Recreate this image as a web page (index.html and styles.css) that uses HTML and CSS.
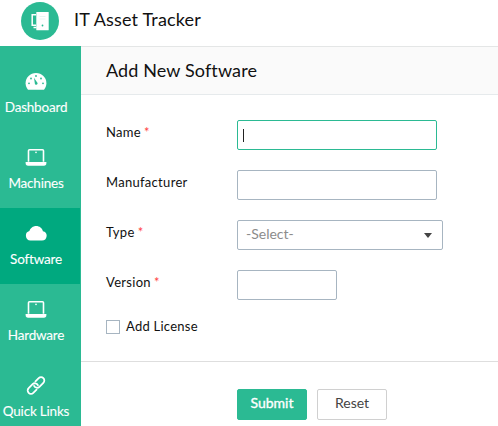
FILE: index.html
```html
<!DOCTYPE html>
<html lang="en">
<head>
<meta charset="utf-8">
<title>IT Asset Tracker</title>
<link rel="stylesheet" href="styles.css">
</head>
<body>
<header class="topbar">
  <svg class="logo" viewBox="0 0 38 38">
    <circle cx="19" cy="19" r="19" fill="#2bba93"/>
    <path d="M15 12.700h-3.800v10.600H15M12.500 25.500h3" fill="none" stroke="#fff" stroke-width="1.500"/>
    <rect x="15.300" y="10" width="12.400" height="18.300" rx=".6" fill="#fff"/>
    <path d="M18.500 14.500h6M18.500 17h6" stroke="#e0f4ee" stroke-width=".8"/>
    <circle cx="21.500" cy="23.500" r=".9" fill="#2bba93"/>
  </svg>
  <h1 class="app-name">IT Asset Tracker</h1>
</header>
<div class="layout">
  <nav class="sidebar">
    <a class="item">
      <svg class="icon" viewBox="0 0 22 22">
        <path d="M3 19.700C1.500 18 .6 15.700.6 13.200.6 7.300 5.200 3 11 3s10.400 4.300 10.400 10.200c0 2.500-.9 4.800-2.400 6.500z" fill="#fff"/>
        <g fill="#2bba93"><circle cx="4" cy="13.300" r=".9"/><circle cx="6" cy="8.500" r=".9"/><circle cx="11" cy="6" r=".9"/><circle cx="16" cy="8.500" r=".9"/><circle cx="18" cy="13.300" r=".9"/><path d="M9 7.700l3 4.500a1.400 1.400 0 1 1-2.200 1z"/></g>
      </svg>
      <span class="text">Dashboard</span>
    </a>
    <a class="item">
      <svg class="icon" viewBox="0 0 22 22">
        <path d="M3.500 15.700V4.700q0-1 1-1h13q1 0 1 1v11" fill="none" stroke="#fff" stroke-width="1.600"/>
        <path d="M.6 16h20.800v1q0 2.700-2.500 2.700H3.100Q.6 19.700.6 17z" fill="#fff"/><circle cx="11" cy="6.400" r=".8" fill="#fff"/>
      </svg>
      <span class="text">Machines</span>
    </a>
    <a class="item active">
      <svg class="icon" viewBox="0 0 22 22">
        <path d="M5.400 18.500a4.800 4.800 0 0 1-1-9.400C5.300 6.200 8 4 11.200 4c3.300 0 6 2.200 6.700 5.200a4.700 4.700 0 0 1-1 9.300z" fill="#fff"/>
      </svg>
      <span class="text">Software</span>
    </a>
    <a class="item">
      <svg class="icon" viewBox="0 0 22 22">
        <path d="M3.500 15.700V4.700q0-1 1-1h13q1 0 1 1v11" fill="none" stroke="#fff" stroke-width="1.600"/>
        <path d="M.6 16h20.800v1q0 2.700-2.500 2.700H3.100Q.6 19.700.6 17z" fill="#fff"/><circle cx="11" cy="6.400" r=".8" fill="#fff"/>
      </svg>
      <span class="text">Hardware</span>
    </a>
    <a class="item">
      <svg class="icon" viewBox="0 0 22 22">
        <g transform="rotate(-45 11 11.500)" fill="none" stroke="#fff" stroke-width="1.800" stroke-linecap="round">
          <path d="M8.500 14.800H3.900a3.300 3.300 0 0 1 0-6.600H9.500a3.300 3.300 0 0 1 3.100 4.400"/>
          <path d="M13.500 8.200h4.600a3.300 3.300 0 0 1 0 6.600H12.500A3.300 3.300 0 0 1 9.400 10.400"/>
        </g>
      </svg>
      <span class="text">Quick Links</span>
    </a>
  </nav>
  <main class="main">
    <h2 class="title"><span class="title-text">Add New Software</span></h2>
    <form class="form">
      <div class="row"><label class="label">Name <b class="star">*</b></label><div class="field focus"><i class="caret"></i></div></div>
      <div class="row"><label class="label">Manufacturer</label><div class="field"></div></div>
      <div class="row"><label class="label">Type <b class="star">*</b></label><div class="field select"><span class="placeholder">-Select-</span><i class="arrow"></i></div></div>
      <div class="row"><label class="label">Version <b class="star">*</b></label><div class="field short"></div></div>
      <div class="check"><i class="box"></i><span class="check-text">Add License</span></div>
    </form>
    <footer class="actions"><button class="btn primary">Submit</button><button class="btn">Reset</button></footer>
  </main>
</div>
</body>
</html>
```
FILE: styles.css
```css
* { box-sizing: border-box; }
body { margin: 0; width: 498px; height: 426px; overflow: hidden; background: #fff; color: #111; font-family: Lato, "Liberation Sans", sans-serif; font-size: 13px; }
.topbar { height: 46px; display: flex; padding: 2px 0 0 21px; }
.logo { width: 38px; height: 38px; }
.app-name { margin: 4px 0 0 15px; font-size: 18px; line-height: 26px; letter-spacing: .18px; font-weight: 400; white-space: nowrap; }
.layout { display: flex; height: 380px; }
.sidebar { flex: 0 0 81px; padding: 10px 1px 0 0; background: #2bba93; overflow: hidden; }
.item { display: flex; flex-direction: column; align-items: center; height: 76px; padding-top: 14px; color: #fff; }
.icon { width: 22px; height: 22px; margin-left: -8px; }
.active { background: #00a97f; }
.text { margin: 5px 0 0 -8px; font-size: 13.500px; line-height: 20px; letter-spacing: -.2px; -webkit-text-stroke: .1px #fff; white-space: nowrap; }
.main { flex: 1; }
.title { height: 49px; margin: 0; padding: 10px 0 0 25px; border-top: 1px solid #e4e6e6; border-bottom: 1px solid #e6eaec; background: #fafafa; font-size: 18px; line-height: 26px; letter-spacing: .12px; font-weight: 400; }
.form { height: 267px; padding: 25px 0 0 25px; border-bottom: 1px solid #dedede; }
.row { display: flex; height: 50px; }
.label { width: 131px; padding-top: 2px; font-size: 13px; line-height: 20px; letter-spacing: .3px; }
.star { margin-left: -.5px; color: #f44; font-weight: 400; }
.field { width: 200px; height: 30px; border: 1px solid #a7b5c1; border-radius: 2px; }
.focus { border-color: #2bba93; padding: 8px 0 0 5px; }
.caret { display: block; width: 1px; height: 13px; background: #222; }
.select { width: 206px; display: flex; justify-content: space-between; padding: 3px 10px 0 8px; color: #8c8c8c; font-size: 14px; line-height: 20px; }
.arrow { margin-top: 9px; width: 8px; height: 5px; background: #444; clip-path: polygon(0 0, 100% 0, 50% 100%); }
.short { width: 100px; }
.check { display: flex; font-size: 13px; line-height: 20px; letter-spacing: .25px; }
.box { width: 14px; height: 14px; margin-right: 6px; border: 1px solid #a7b5c1; }
.check-text { margin-top: -4px; }
.actions { display: flex; gap: 10px; padding: 27px 0 0 156px; }
.btn { width: 70px; height: 31px; padding: 0 0 3px; border: 1px solid #d0d0d0; border-radius: 2px; background: #fff; color: #444; font: 400 14px/20px Lato, "Liberation Sans", sans-serif; }
.primary { border-color: #2bba93; background: #2bba93; color: #fff; -webkit-text-stroke: .35px #fff; }
```
